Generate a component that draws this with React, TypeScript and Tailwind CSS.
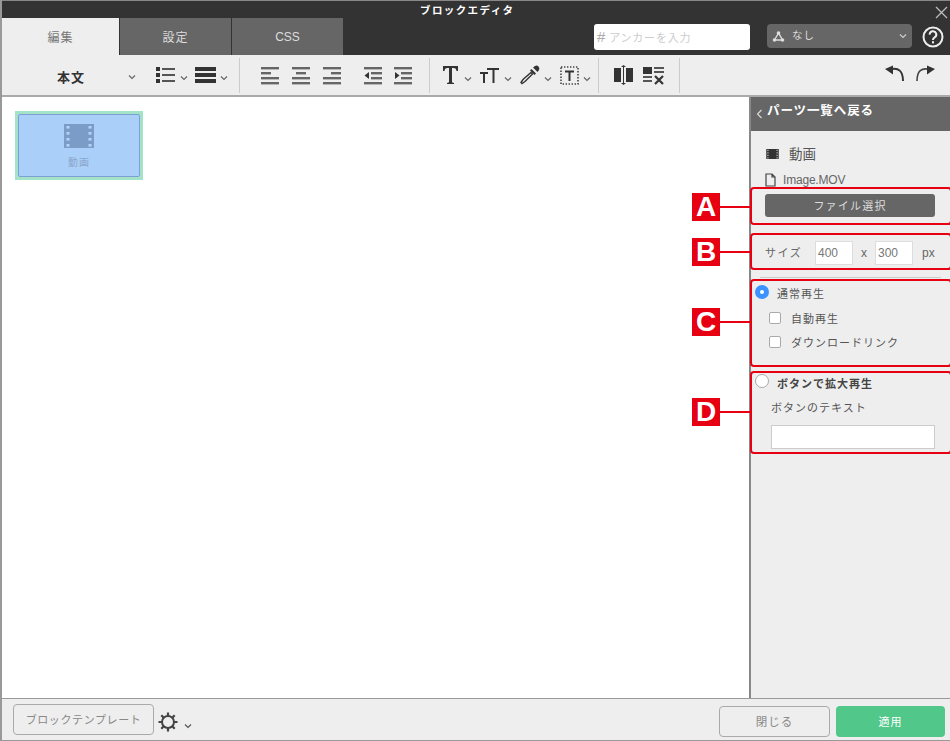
import React from "react";

const FONT = '"Noto Sans CJK JP","Liberation Sans",sans-serif';

function Chev({ className = "", color = "#666" }: { className?: string; color?: string }) {
  return (
    <svg width="8" height="6" viewBox="0 0 8 6" className={className}>
      <path d="M1 1.5 L4 4.5 L7 1.5" fill="none" stroke={color} strokeWidth="1.2" />
    </svg>
  );
}

function Film({ w, h, color, hole }: { w: number; h: number; color: string; hole: string }) {
  return (
    <svg width={w} height={h} viewBox="0 0 30 24">
      <rect width="30" height="24" fill={color} />
      {[2, 8, 14, 20].map((y) => (
        <g key={y}>
          <rect x="2.5" y={y} width="3" height="2.6" fill={hole} />
          <rect x="24.5" y={y} width="3" height="2.6" fill={hole} />
        </g>
      ))}
    </svg>
  );
}

function Lines({ rows }: { rows: [number, number, number][] }) {
  return (
    <svg width="19" height="19" viewBox="0 0 19 19">
      {rows.map(([x, y, w], i) => (
        <rect key={i} x={x} y={y} width={w} height="2.4" fill="#666" />
      ))}
    </svg>
  );
}

function Divider() {
  return <div className="w-px h-[35px] bg-[#ccc]" />;
}

function Callout({ label, top, height, labelTop }: { label: string; top: string; height: string; labelTop: string }) {
  return (
    <>
      <div className={`absolute left-[748px] w-[202px] border-2 border-[#e60012] rounded-[4px] ${top} ${height}`} />
      <div
        className={`absolute left-[690px] w-[28px] h-[28px] bg-[#e60012] text-white flex items-center justify-center text-[28px] font-bold leading-none ${labelTop}`}
        style={{ fontFamily: '"Liberation Sans",sans-serif' }}
      >
        {label}
      </div>
      <div className={`absolute left-[718px] w-[30px] h-[2px] bg-[#e60012] mt-[13px] ${labelTop}`} />
    </>
  );
}

export default function App() {
  return (
    <div
      className="relative w-[950px] h-[741px] overflow-hidden flex flex-col bg-[#eee] border-l-2 border-[#999]"
      style={{ fontFamily: FONT }}
    >
      {/* Title bar with tabs */}
      <div className="h-[55px] bg-[#333] border-t border-[#888] relative flex items-end shrink-0">
        <div className="absolute left-[418px] top-[1px] text-[10.5px] font-bold text-white tracking-[1.4px] leading-[15px]">
          ブロックエディタ
        </div>
        <svg className="absolute left-[933px] top-[5px]" width="13" height="13" viewBox="0 0 13 13">
          <path d="M1 1 L12 12 M12 1 L1 12" stroke="#bbb" strokeWidth="1.3" />
        </svg>
        <div className="flex h-[37px] items-stretch">
          <div className="w-[117px] bg-[#eee] text-[#777] text-[12px] flex items-center justify-center tracking-[1px]">編集</div>
          <div className="w-[111px] ml-px bg-[#666] text-[#ddd] text-[12px] flex items-center justify-center tracking-[1px]">設定</div>
          <div className="w-[111px] ml-px bg-[#666] text-[#ddd] text-[12px] flex items-center justify-center" style={{ fontFamily: '"Liberation Sans",sans-serif' }}>CSS</div>
        </div>
        <div className="ml-[251px] mb-[5px] w-[156px] h-[26px] bg-white rounded-[3px] flex items-center pl-[3px] text-[#ccc] text-[11px] tracking-[0.8px]">
          <span className="text-[15px] mr-[3px] text-[#aaa]" style={{ fontFamily: '"Liberation Sans",sans-serif' }}>#</span>
          アンカーを入力
        </div>
        <div className="ml-[17px] mb-[7px] w-[145px] h-[24px] bg-[#666] rounded-[4px] flex items-center pl-[5px] pr-[5px] text-[#ddd] text-[10.5px] tracking-[1px]">
          <svg width="13" height="13" viewBox="0 0 13 13" className="mr-[7px]">
            <path d="M6.5 3 L2.5 10 H10.5 Z" fill="none" stroke="#ddd" strokeWidth="1.4" />
            <circle cx="6.5" cy="3" r="1.8" fill="#ddd" />
            <circle cx="2.5" cy="10" r="1.8" fill="#ddd" />
            <circle cx="10.5" cy="10" r="1.8" fill="#ddd" />
          </svg>
          <span className="mb-[2px]">なし</span>
          <Chev className="ml-auto" color="#ccc" />
        </div>
        <svg className="ml-[10px] mb-[7px]" width="22" height="22" viewBox="0 0 22 22">
          <circle cx="11" cy="11" r="9.5" fill="none" stroke="#eee" strokeWidth="2" />
          <path d="M7.7 8.6 A3.3 3.3 0 1 1 12.6 11.4 C11.4 12.1 11 12.6 11 14" fill="none" stroke="#eee" strokeWidth="2" />
          <rect x="10" y="15.2" width="2" height="2.2" fill="#eee" />
        </svg>
      </div>

      {/* Toolbar */}
      <div className="h-[42px] bg-[#eee] border-b-2 border-[#aaa] flex items-center shrink-0 relative">
        <span className="ml-[55px] mt-[4px] w-[59px] text-[13px] font-bold text-[#333] tracking-[1px]">本文</span>
        <Chev className="ml-[12px] mt-[3px]" />
        {/* list */}
        <svg className="ml-[20px]" width="20" height="19" viewBox="0 0 20 19">
          {[1, 7, 13].map((y) => (
            <g key={y}>
              <rect x="0" y={y} width="4" height="4" fill="#333" />
              <rect x="6" y={y + 1} width="13" height="2" fill="#555" />
            </g>
          ))}
        </svg>
        <Chev className="ml-[4px] mt-[5px]" />
        <svg className="ml-[7px]" width="21" height="18" viewBox="0 0 21 18">
          <rect y="1" width="21" height="4" fill="#333" />
          <rect y="7" width="21" height="4" fill="#333" />
          <rect y="13" width="21" height="4" fill="#333" />
        </svg>
        <Chev className="ml-[4px] mt-[5px]" />
        <div className="ml-[11px]"><Divider /></div>
        <div className="ml-[21px] flex gap-[12px]">
          <Lines rows={[[0, 1, 18], [0, 6, 10], [0, 11, 18], [0, 16, 18]]} />
          <Lines rows={[[0, 1, 18], [4, 6, 10], [0, 11, 18], [0, 16, 18]]} />
          <Lines rows={[[0, 1, 18], [8, 6, 10], [0, 11, 18], [0, 16, 18]]} />
        </div>
        <div className="ml-[22px] flex gap-[11px]">
          <svg width="19" height="19" viewBox="0 0 19 19">
            <rect y="1" width="18" height="2.4" fill="#666" /><rect x="7" y="6" width="11" height="2.4" fill="#666" /><rect x="7" y="11" width="11" height="2.4" fill="#666" /><rect y="16" width="18" height="2.4" fill="#666" />
            <path d="M5 6 V13 L0.5 9.5 Z" fill="#333" />
          </svg>
          <svg width="19" height="19" viewBox="0 0 19 19">
            <rect y="1" width="18" height="2.4" fill="#666" /><rect x="7" y="6" width="11" height="2.4" fill="#666" /><rect x="7" y="11" width="11" height="2.4" fill="#666" /><rect y="16" width="18" height="2.4" fill="#666" />
            <path d="M1 6 V13 L5.5 9.5 Z" fill="#333" />
          </svg>
        </div>
        <div className="ml-[16px]"><Divider /></div>
        <svg className="ml-[12px]" width="17" height="20" viewBox="0 0 17 20">
          <path d="M1 1 H16 V6 H14.5 C14.3 4 13.5 3 11.5 3 H10 V16.5 C10 17.5 10.5 17.8 12 18 V19 H5 V18 C6.5 17.8 7 17.5 7 16.5 V3 H5.5 C3.5 3 2.7 4 2.5 6 H1 Z" fill="#333" />
        </svg>
        <Chev className="ml-[5px] mt-[7px]" />
        <svg className="ml-[8px]" width="19" height="17" viewBox="0 0 19 17">
          <path d="M0 5 H8 V7 H5 V16 H3 V7 H0 Z M7 1 H19 V3 H14.5 V16 H12.5 V3 H7 Z" fill="#333" />
        </svg>
        <Chev className="ml-[5px] mt-[7px]" />
        <svg className="ml-[8px]" width="20" height="20" viewBox="0 0 20 20">
          <path d="M13 2.5 L15 1 Q17 0 18.5 1.5 Q20 3 19 5 L17.5 7 Z" fill="#333" />
          <path d="M11.5 4 L16 8.5 L14.5 10 L10 5.5 Z" fill="#333" />
          <path d="M11 7.5 L12.5 9 L5 16.5 L2 18.5 L1 17.5 L3 14.5 Z" fill="#eee" stroke="#333" strokeWidth="1.4" />
        </svg>
        <Chev className="ml-[4px] mt-[7px]" />
        <svg className="ml-[8px]" width="19" height="19" viewBox="0 0 19 19">
          <rect x="1" y="1" width="17" height="17" fill="none" stroke="#444" strokeWidth="1.6" strokeDasharray="1.4 1.6" />
          <path d="M5 4.5 H14 V6.5 H10.5 V15 H8.5 V6.5 H5 Z" fill="#333" />
        </svg>
        <Chev className="ml-[4px] mt-[7px]" />
        <div className="ml-[7px]"><Divider /></div>
        <svg className="ml-[15px]" width="19" height="21" viewBox="0 0 19 21">
          <rect x="0" y="3" width="7" height="14" fill="#333" />
          <rect x="12" y="3" width="7" height="14" fill="#333" />
          <rect x="9" y="2" width="1" height="16" fill="#333" />
          <path d="M7 2 H12 L9.5 0 Z M7 18 H12 L9.5 20 Z" fill="#333" />
        </svg>
        <svg className="ml-[10px]" width="21" height="19" viewBox="0 0 21 19">
          <rect x="0" y="1" width="9" height="7" fill="#333" />
          <rect x="11" y="1" width="10" height="2" fill="#555" /><rect x="11" y="5" width="10" height="2" fill="#555" />
          <rect x="0" y="10" width="9" height="2" fill="#555" /><rect x="0" y="14" width="9" height="2" fill="#555" />
          <path d="M12 10 L20 18 M20 10 L12 18" stroke="#333" strokeWidth="2.2" />
        </svg>
        <div className="ml-[15px]"><Divider /></div>
        <svg className="ml-[205px] mb-[3px]" width="20" height="17" viewBox="0 0 20 17">
          <path d="M5 4.5 Q18 1 18 16" fill="none" stroke="#333" strokeWidth="2" />
          <path d="M0 4 L8 0.5 L8 9.5 Z" fill="#333" />
        </svg>
        <svg className="ml-[10px] mb-[3px]" width="20" height="17" viewBox="0 0 20 17">
          <path d="M15 4.5 Q2 1 2 16" fill="none" stroke="#444" strokeWidth="1.6" />
          <path d="M20 4 L12 0.5 L12 9.5 Z" fill="#333" />
        </svg>
      </div>

      {/* Main */}
      <div className="flex-1 flex min-h-0">
        <div className="w-[747px] bg-white pt-[14px] pl-[13px] shrink-0">
          <div className="w-[128px] h-[69px] bg-[#a3e4c8] p-[3px]">
            <div className="h-[63px] bg-[#aacff8] border border-[#7f9fd4] rounded-[2px] flex flex-col items-center pt-[9px]">
              <Film w={30} h={24} color="#7a9cc6" hole="#b5d3f5" />
              <span className="text-[10px] text-[#8aa6cc] mt-[7px] tracking-[1px] leading-[14px]">動画</span>
            </div>
          </div>
        </div>
        <div className="flex-1 bg-[#eee] border-l-2 border-[#888] text-[#555]">
          <div className="h-[34px] bg-[#666] flex items-center pl-[5px] text-white font-bold text-[12.5px] tracking-[0.9px]">
            <svg width="7" height="10" viewBox="0 0 7 10" className="mr-[4px] mt-[-1px]">
              <path d="M5.5 1 L1.5 5 L5.5 9" fill="none" stroke="#ddd" strokeWidth="1.1" />
            </svg>
            <span className="mb-[7px]">パーツ一覧へ戻る</span>
          </div>
          <div className="flex items-center h-[20px] mt-[13px] pl-[15px]">
            <Film w={13} h={10} color="#333" hole="#ccc" />
            <span className="ml-[10px] mb-[2px] text-[13.5px] text-[#555]">動画</span>
          </div>
          <div className="flex items-center h-[16px] mt-[8px] pl-[14px]">
            <svg width="11" height="14" viewBox="0 0 11 14">
              <path d="M1 1 H7 L10 4 V13 H1 Z M7 1 V4 H10" fill="none" stroke="#444" strokeWidth="1.2" />
            </svg>
            <span className="ml-[7px] text-[12px] text-[#666] tracking-[-0.2px]" style={{ fontFamily: '"Liberation Sans",sans-serif' }}>Image.MOV</span>
          </div>
          <div className="ml-[14px] mt-[6px] w-[170px] h-[23px] bg-[#666] rounded-[3px] text-[#ddd] text-[11px] tracking-[1.2px] flex items-center justify-center">
            ファイル選択
          </div>
          <div className="flex items-center h-[24px] mt-[24px] pl-[14px] text-[11px] text-[#666]">
            <span className="w-[50px] mb-[2px] tracking-[1.5px]">サイズ</span>
            <div className="w-[38px] h-[24px] bg-white border border-[#ddd] text-[12px] text-[#777] pl-[2px] flex items-center" style={{ fontFamily: '"Liberation Sans",sans-serif' }}>400</div>
            <span className="w-[22px] text-center text-[12px]" style={{ fontFamily: '"Liberation Sans",sans-serif' }}>x</span>
            <div className="w-[38px] h-[24px] bg-white border border-[#ddd] text-[12px] text-[#777] pl-[2px] flex items-center" style={{ fontFamily: '"Liberation Sans",sans-serif' }}>300</div>
            <span className="ml-[9px] text-[12px]" style={{ fontFamily: '"Liberation Sans",sans-serif' }}>px</span>
          </div>
          <div className="mx-[9px] mt-[12px] h-px bg-[#ccc]" />
          <div className="flex items-center h-[16px] mt-[7px] pl-[4px] text-[11px] text-[#555] tracking-[1px]">
            <div className="w-[14px] h-[14px] rounded-full bg-[#3c93ff] flex items-center justify-center mb-[2px]">
              <div className="w-[4px] h-[4px] rounded-full bg-white" />
            </div>
            <span className="ml-[8px] mt-[1px]">通常再生</span>
          </div>
          <div className="flex items-center h-[16px] mt-[9px] pl-[18px] text-[11px] text-[#555] tracking-[1px]">
            <div className="w-[12px] h-[12px] rounded-[2px] bg-white border border-[#aaa] mb-[1px]" />
            <span className="ml-[10px]">自動再生</span>
          </div>
          <div className="flex items-center h-[16px] mt-[8px] pl-[18px] text-[11px] text-[#555] tracking-[1px]">
            <div className="w-[12px] h-[12px] rounded-[2px] bg-white border border-[#aaa] mb-[1px]" />
            <span className="ml-[10px]">ダウンロードリンク</span>
          </div>
          <div className="flex items-center h-[16px] mt-[24px] pl-[4px] text-[11px] font-bold text-[#444] tracking-[1px]">
            <div className="w-[14px] h-[14px] rounded-full bg-white border border-[#aaa] mb-[2px]" />
            <span className="ml-[8px] mt-[2px]">ボタンで拡大再生</span>
          </div>
          <div className="ml-[20px] mt-[9px] h-[16px] text-[11px] leading-[16px] text-[#555] tracking-[1px]">ボタンのテキスト</div>
          <div className="ml-[20px] mt-[10px] w-[164px] h-[24px] bg-white border border-[#ccc]" />
        </div>
      </div>

      {/* Bottom bar */}
      <div className="h-[43px] bg-[#eee] border-t border-[#999] border-b shrink-0 flex items-start relative">
        <div className="ml-[11px] mt-[5px] w-[141px] h-[31px] border border-[#aaa] rounded-[4px] text-[#888] text-[11px] tracking-[0.6px] flex items-center justify-center">
          ブロックテンプレート
        </div>
        <svg className="ml-[4px] mt-[13px]" width="20" height="20" viewBox="0 0 20 20">
          <circle cx="10" cy="10" r="6" fill="none" stroke="#444" strokeWidth="2" />
          <path d="M10 0.5 V4 M10 16 V19.5 M0.5 10 H4 M16 10 H19.5 M3.3 3.3 L5.8 5.8 M14.2 14.2 L16.7 16.7 M16.7 3.3 L14.2 5.8 M5.8 14.2 L3.3 16.7" stroke="#444" strokeWidth="2.2" />
        </svg>
        <Chev className="ml-[6px] mt-[24px]" color="#555" />
        <div className="ml-auto flex gap-[6px] mt-[7px] mr-[5px]">
          <div className="w-[111px] h-[31px] border border-[#aaa] rounded-[4px] text-[#888] text-[11.5px] tracking-[1px] flex items-center justify-center">閉じる</div>
          <div className="w-[109px] h-[31px] bg-[#52c78a] rounded-[4px] text-white text-[11px] tracking-[1px] flex items-center justify-center">適用</div>
        </div>
      </div>

      <Callout label="A" top="top-[187px]" height="h-[38px]" labelTop="top-[193px]" />
      <Callout label="B" top="top-[233px]" height="h-[37px]" labelTop="top-[238px]" />
      <Callout label="C" top="top-[279px]" height="h-[88px]" labelTop="top-[308px]" />
      <Callout label="D" top="top-[371px]" height="h-[83px]" labelTop="top-[398px]" />
    </div>
  );
}
